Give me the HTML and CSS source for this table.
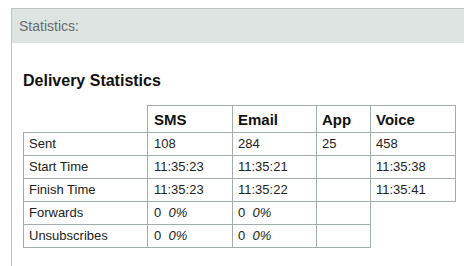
FILE: index.html
```html
<!DOCTYPE html>
<html>
<head>
<meta charset="utf-8" />
<title>Statistics</title>
<link rel="stylesheet" href="styles.css">
</head>
<body>
<div class="panel">
	<div class="panel_head">Statistics:</div>
	<div class="panel_body">
		<h3>Delivery Statistics</h3>
		<table class="stats">
			<colgroup>
				<col class="c_label" />
				<col class="c_sms" />
				<col class="c_email" />
				<col class="c_app" />
				<col class="c_voice" />
			</colgroup>
			<tr>
				<th class="blank"></th>
				<th class="sms">SMS</th>
				<th>Email</th>
				<th>App</th>
				<th>Voice</th>
			</tr>
			<tr>
				<td>Sent</td>
				<td class="sms">108</td>
				<td>284</td>
				<td>25</td>
				<td>458</td>
			</tr>
			<tr>
				<td>Start Time</td>
				<td class="sms">11:35:23</td>
				<td>11:35:21</td>
				<td></td>
				<td>11:35:38</td>
			</tr>
			<tr>
				<td>Finish Time</td>
				<td class="sms">11:35:23</td>
				<td>11:35:22</td>
				<td></td>
				<td>11:35:41</td>
			</tr>
			<tr>
				<td>Forwards</td>
				<td class="sms">0&nbsp; <em>0%</em></td>
				<td>0&nbsp; <em>0%</em></td>
				<td></td>
			</tr>
			<tr>
				<td>Unsubscribes</td>
				<td class="sms">0&nbsp; <em>0%</em></td>
				<td>0&nbsp; <em>0%</em></td>
				<td></td>
			</tr>
		</table>
	</div>
</div>
</body>
</html>
```

FILE: styles.css
```css
*{ margin:0; padding:0;}
body{ background:#fff; font-family:"Liberation Sans", Arial, sans-serif; color:#222; overflow:hidden;}

.panel{ width:480px; height:300px; margin:8px 0 0 11px; border:1px solid #bcc5c2; border-right:none; border-bottom:none;}
.panel_head{ height:34px; line-height:34px; padding-left:7px; background:#dde4e2; font-size:14px; color:#666b6d;}
.panel_body{ padding:29px 0 0 11px;}
.panel_body h3{ font-size:16px; line-height:18px; font-weight:bold; color:#111; margin-bottom:15px;}

.stats{ border-collapse:collapse; table-layout:fixed; width:433px;}
.stats .c_label{ width:124px;}
.stats .c_sms{ width:85px;}
.stats .c_email{ width:84px;}
.stats .c_app{ width:54px;}
.stats .c_voice{ width:85px;}
.stats th, .stats td{ border:1px solid #a3adad; text-align:left; padding:0 5px;}
.stats .sms{ padding-left:6px;}
.stats th{ height:26px; font-size:15px; font-weight:bold; color:#111;}
.stats th.blank{ border:none;}
.stats td{ height:22px; font-size:13px; line-height:16px;}
.stats td em{ font-style:italic;}
```
